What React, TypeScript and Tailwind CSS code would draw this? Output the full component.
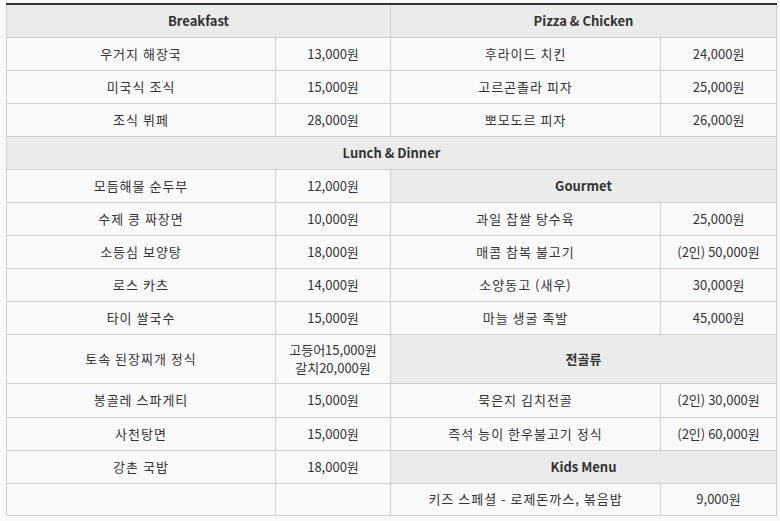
import React from "react";

const td = "border border-[#cfcfcf] bg-[#fafafa] text-center align-middle px-2 font-normal";
const tn = td + " tracking-[1px]";
const th = "border border-[#cfcfcf] bg-[#ebebeb] text-center align-middle font-bold";

export default function App() {
  return (
    <div
      className="w-[780px] h-[521px] bg-[#f9f9f9] pt-[3px] pl-[6px] text-[13px] text-[#333]"
      style={{ fontFamily: '"Noto Sans CJK KR", "Noto Sans", sans-serif' }}
    >
      <table className="w-[770px] border-collapse table-fixed">
        <colgroup>
          <col className="w-[269px]" />
          <col className="w-[115px]" />
          <col className="w-[270px]" />
          <col className="w-[116px]" />
        </colgroup>
        <tbody>
          <tr className="h-[33px]">
            <th colSpan={2} className={th + " border-t-2 border-t-[#333]"}>Breakfast</th>
            <th colSpan={2} className={th + " border-t-2 border-t-[#333]"}>Pizza &amp; Chicken</th>
          </tr>
          <tr className="h-[33px]">
            <td className={tn}>우거지 해장국</td>
            <td className={td}>13,000원</td>
            <td className={tn}>후라이드 치킨</td>
            <td className={td}>24,000원</td>
          </tr>
          <tr className="h-[33px]">
            <td className={tn}>미국식 조식</td>
            <td className={td}>15,000원</td>
            <td className={tn}>고르곤졸라 피자</td>
            <td className={td}>25,000원</td>
          </tr>
          <tr className="h-[33px]">
            <td className={tn}>조식 뷔페</td>
            <td className={td}>28,000원</td>
            <td className={tn}>뽀모도르 피자</td>
            <td className={td}>26,000원</td>
          </tr>
          <tr className="h-[33px]">
            <th colSpan={4} className={th}>Lunch &amp; Dinner</th>
          </tr>
          <tr className="h-[33px]">
            <td className={tn}>모듬해물 순두부</td>
            <td className={td}>12,000원</td>
            <th colSpan={2} className={th}>Gourmet</th>
          </tr>
          <tr className="h-[33px]">
            <td className={tn}>수제 콩 짜장면</td>
            <td className={td}>10,000원</td>
            <td className={tn}>과일 찹쌀 탕수육</td>
            <td className={td}>25,000원</td>
          </tr>
          <tr className="h-[33px]">
            <td className={tn}>소등심 보양탕</td>
            <td className={td}>18,000원</td>
            <td className={tn}>매콤 참복 불고기</td>
            <td className={td}>(2인) 50,000원</td>
          </tr>
          <tr className="h-[33px]">
            <td className={tn}>로스 카츠</td>
            <td className={td}>14,000원</td>
            <td className={tn}>소양동고 (새우)</td>
            <td className={td}>30,000원</td>
          </tr>
          <tr className="h-[33px]">
            <td className={tn}>타이 쌀국수</td>
            <td className={td}>15,000원</td>
            <td className={tn}>마늘 생굴 족발</td>
            <td className={td}>45,000원</td>
          </tr>
          <tr className="h-[49px]">
            <td className={tn}>토속 된장찌개 정식</td>
            <td className={td + " leading-[18px]"}>
              고등어15,000원
              <br />
              갈치20,000원
            </td>
            <th colSpan={2} className={th}>전골류</th>
          </tr>
          <tr className="h-[34px]">
            <td className={tn}>봉골레 스파게티</td>
            <td className={td}>15,000원</td>
            <td className={tn}>묵은지 김치전골</td>
            <td className={td}>(2인) 30,000원</td>
          </tr>
          <tr className="h-[33px]">
            <td className={tn}>사천탕면</td>
            <td className={td}>15,000원</td>
            <td className={tn}>즉석 능이 한우불고기 정식</td>
            <td className={td}>(2인) 60,000원</td>
          </tr>
          <tr className="h-[33px]">
            <td className={tn}>강촌 국밥</td>
            <td className={td}>18,000원</td>
            <th colSpan={2} className={th}>Kids Menu</th>
          </tr>
          <tr className="h-[32px]">
            <td className={td}></td>
            <td className={td}></td>
            <td className={tn}>키즈 스페셜 - 로제돈까스, 볶음밥</td>
            <td className={td}>9,000원</td>
          </tr>
        </tbody>
      </table>
    </div>
  );
}
